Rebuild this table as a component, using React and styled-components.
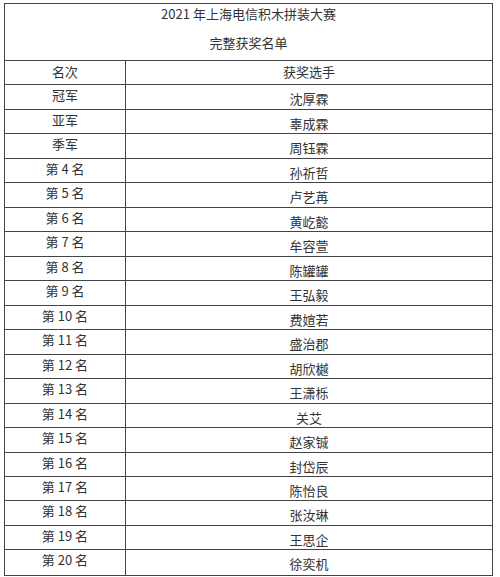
import React from 'react'
import styled, { createGlobalStyle } from 'styled-components'

const GlobalStyle = createGlobalStyle`
  html, body {
    margin: 0;
    padding: 0;
    background: #ffffff;
  }
  body {
    font-family: "Noto Sans CJK SC", "Noto Sans", sans-serif;
    color: #333333;
  }
`

const Page = styled.div`
  padding: 3px 0 0 4px;
`

const Sheet = styled.div`
  box-sizing: border-box;
  width: 489px;
  border: 1px solid #444444;
  font-size: 13px;
`

const Caption = styled.header`
  box-sizing: border-box;
  height: 57px;
  border-bottom: 1px solid #444444;
  text-align: center;
  p {
    margin: 0;
    line-height: 19px;
  }
  p + p {
    margin-top: 10px;
  }
`

const Row = styled.div`
  box-sizing: border-box;
  display: grid;
  grid-template-columns: 120px 1fr;
  height: calc(514px / 21);
  border-bottom: ${p => (p.$last ? 'none' : '1px solid #444444')};
`

const Cell = styled.div`
  text-align: center;
  line-height: 18px;
  padding-top: ${p => p.$offset}px;
  white-space: pre;
  & + & {
    border-left: 1px solid #444444;
  }
`

const ranks = ['冠军', '亚军', '季军']
const winners = [
  '沈厚霖', '辜成霖', '周钰霖', '孙祈哲', '卢艺苒', '黄屹懿', '牟容萱',
  '陈罐罐', '王弘毅', '费媗若', '盛治郡', '胡欣樾', '王潇栎', '关艾',
  '赵家铖', '封岱辰', '陈怡良', '张汝琳', '王思企', '徐奕机',
]

const rankLabel = i => (i < 3 ? ranks[i] : `第 ${i + 1} 名`)

export default function App() {
  return (
    <Page>
      <GlobalStyle />
      <Sheet>
        <Caption>
          <p>2021 年上海电信积木拼装大赛</p>
          <p>完整获奖名单</p>
        </Caption>
        <Row>
          <Cell $offset={2}>名次</Cell>
          <Cell $offset={2}>获奖选手</Cell>
        </Row>
        {winners.map((name, i) => (
          <Row key={name} $last={i === winners.length - 1}>
            <Cell $offset={1}>{rankLabel(i)}</Cell>
            <Cell $offset={5}>{name}</Cell>
          </Row>
        ))}
      </Sheet>
    </Page>
  )
}
